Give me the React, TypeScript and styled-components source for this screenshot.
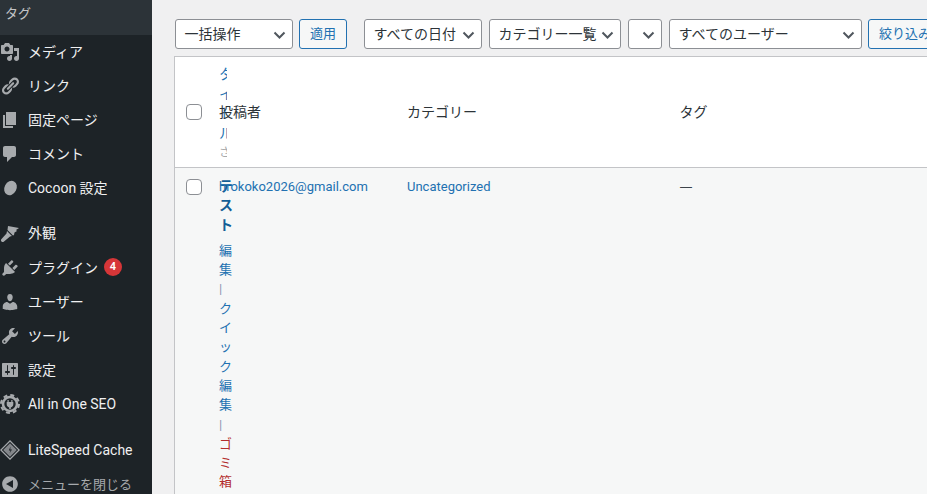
import React from 'react';
import styled, { createGlobalStyle } from 'styled-components';

const FONT = 'Roboto, "Noto Sans CJK JP", sans-serif';

const Global = createGlobalStyle`
  html, body {
    margin: 0;
    padding: 0;
    height: 100%;
    overflow: hidden;
    background: #f0f0f1;
    font-family: ${FONT};
  }
`;

const Page = styled.div`
  display: flex;
  width: 927px;
  height: 494px;
  overflow: hidden;
`;

const Sidebar = styled.nav`
  width: 152px;
  flex: none;
  height: 494px;
  overflow: hidden;
  background: #1d2327;
  color: #f0f0f1;
`;

const SubItem = styled.div`
  height: 35px;
  margin-bottom: -1px;
  background: #2c3338;
  color: #c3c4c7;
  font-size: 13px;
  line-height: 27px;
  padding-left: 5px;
`;

const MenuRow = styled.div<{ $gap?: number }>`
  display: flex;
  align-items: center;
  height: 34px;
  margin-top: ${(p) => p.$gap ?? 0}px;
  font-size: 14px;
  white-space: nowrap;
`;

const IconSlot = styled.span`
  width: 28px;
  flex: none;
  display: flex;
  align-items: center;
  color: #a7aaad;

  svg {
    display: block;
    width: 20px;
    height: 20px;
    margin-top: 2px;
    fill: currentColor;
  }
`;

const MenuLabel = styled.span<{ $latin?: boolean }>`
  padding-top: ${(p) => (p.$latin ? 2 : 0)}px;
`;

const MutedLabel = styled.span`
  color: #a7aaad;
  font-size: 13px;
`;

const Badge = styled.span`
  display: inline-block;
  width: 18px;
  height: 18px;
  margin-left: 6px;
  border-radius: 50%;
  background: #d63638;
  color: #fff;
  font-size: 11px;
  font-weight: 600;
  line-height: 18px;
  text-align: center;
`;

const Main = styled.main`
  flex: 1;
  min-width: 0;
  padding: 19px 0 0 22px;
  overflow: hidden;
`;

const Toolbar = styled.div`
  display: flex;
  align-items: center;
  width: 800px;
  height: 30px;
  padding-left: 1px;
`;

const FakeSelect = styled.div<{ $w: number; $after?: number }>`
  box-sizing: border-box;
  position: relative;
  flex: none;
  width: ${(p) => p.$w}px;
  height: 30px;
  margin-right: ${(p) => p.$after ?? 6}px;
  padding-left: 8.5px;
  background: #fff;
  border: 1px solid #8c8f94;
  border-radius: 3px;
  color: #2c3338;
  font-size: 14px;
  line-height: 28px;
  white-space: nowrap;
  overflow: hidden;

  svg {
    position: absolute;
    right: 5px;
    top: 7px;
    width: 15px;
    height: 15px;
    fill: none;
    stroke: #50575e;
    stroke-width: 2;
  }
`;

const FakeButton = styled.div<{ $w: number; $after?: number }>`
  box-sizing: border-box;
  flex: none;
  width: ${(p) => p.$w}px;
  height: 30px;
  margin-right: ${(p) => p.$after ?? 0}px;
  padding-left: 10px;
  background: #f6f7f7;
  border: 1px solid #2271b1;
  border-radius: 3px;
  color: #2271b1;
  font-size: 13px;
  line-height: 28px;
  white-space: nowrap;
  overflow: hidden;
`;

const Table = styled.div`
  margin-top: 7px;
  width: 800px;
  background: #fff;
  border: 1px solid #c3c4c7;
  border-right: 0;
`;

const Row = styled.div<{ $head?: boolean }>`
  display: grid;
  grid-template-columns: 44px 0 188px 272.5px 1fr;
  height: ${(p) => (p.$head ? '110px' : '400px')};
  background: ${(p) => (p.$head ? '#fff' : '#f6f7f7')};
  border-top: ${(p) => (p.$head ? '0' : '1px solid #c3c4c7')};
  font-size: 13px;
  line-height: 19.5px;
`;

const CheckCell = styled.div<{ $head?: boolean }>`
  display: flex;
  align-items: ${(p) => (p.$head ? 'center' : 'flex-start')};
  padding-left: 11px;
  padding-top: ${(p) => (p.$head ? 0 : 11)}px;
`;

const Check = styled.span`
  box-sizing: border-box;
  display: block;
  width: 16px;
  height: 16px;
  background: #fff;
  border: 1px solid #8c8f94;
  border-radius: 4px;
`;

const HeadCell = styled.div`
  display: flex;
  align-items: center;
  padding-top: 2px;
  color: #2c3338;
  font-size: 14px;
  white-space: nowrap;
`;

const BodyCell = styled.div`
  padding-top: 9px;
  color: #2271b1;
  white-space: nowrap;
`;

const Dash = styled.span`
  color: #3c434a;
  font-family: "Noto Sans", sans-serif;
`;

const TitleHead = styled.div`
  width: 8px;
  padding-top: 8px;
  overflow: hidden;
  color: #2271b1;
  font-size: 14px;
  line-height: 19.5px;
  word-break: break-all;
`;

const SortMark = styled.span`
  color: #a7aaad;
  font-size: 12px;
`;

const TitleBody = styled.div`
  width: 14px;
  padding-top: 9px;
  line-height: 19.3px;
  word-break: break-all;
`;

const TitleName = styled.strong`
  display: block;
  margin-bottom: 6px;
  color: #135e96;
  font-size: 14px;
  font-weight: 700;
`;

const Action = styled.span<{ $danger?: boolean }>`
  color: ${(p) => (p.$danger ? '#b32d2e' : '#2271b1')};
`;

const Pipe = styled.span`
  color: #8f95b2;
`;

const Chevron = () => (
  <svg viewBox="0 0 15 15">
    <path d="M2.5 5.5 7.5 10.5 12.5 5.5" />
  </svg>
);

const MediaIcon = () => (
  <svg viewBox="0 0 20 20">
    <path
      fillRule="evenodd"
      d="M13 11V4c0-.55-.45-1-1-1h-1.67L9 1H5L3.67 3H2c-.55 0-1 .45-1 1v7c0 .55.45 1 1 1h10c.55 0 1-.45 1-1zM7 4.5c1.38 0 2.5 1.12 2.5 2.5S8.38 9.5 7 9.5 4.5 8.38 4.5 7 5.62 4.5 7 4.5z"
    />
    <path d="M14 6h5v10.5c0 1.38-1.12 2.5-2.5 2.5S14 17.88 14 16.5s1.12-2.5 2.5-2.5c.17 0 .34.02.5.05V9h-3V6zm-4 8.05V13h2v3.5c0 1.38-1.12 2.5-2.5 2.5S7 17.88 7 16.5 8.12 14 9.5 14c.17 0 .34.02.5.05z" />
  </svg>
);
const LinkIcon = () => (
  <svg viewBox="0 0 20 20">
    <path d="M17.74 2.76c1.68 1.69 1.68 4.41 0 6.1l-1.53 1.52c-1.12 1.12-2.7 1.49-4.13 1.13l2.62-2.62.76-.76.76-.76c.84-.84.84-2.2 0-3.04-.84-.85-2.2-.85-3.04 0l-.76.76-3.38 3.38c-.37-1.43 0-3.01 1.12-4.13l1.52-1.53c1.69-1.68 4.42-1.68 6.1 0zM8.59 13.43l5.34-5.34c.42-.42.42-1.1 0-1.52-.44-.43-1.13-.39-1.52 0l-5.34 5.34c-.42.42-.42 1.1 0 1.52.44.43 1.13.39 1.52 0zm-.76 2.29l4.14-4.14c.38 1.43 0 3.01-1.12 4.13l-1.52 1.53c-1.69 1.68-4.42 1.68-6.1 0-1.68-1.69-1.68-4.42 0-6.1l1.53-1.52c1.12-1.12 2.7-1.49 4.13-1.13l-4.14 4.14c-.84.84-.84 2.2 0 3.04.84.85 2.2.85 3.04 0z" />
  </svg>
);
const PageIcon = () => (
  <svg viewBox="0 0 20 20">
    <path d="M6 15V2h10v13H6zm-1 1h8v2H3V5h2v11z" />
  </svg>
);
const CommentIcon = () => (
  <svg viewBox="0 0 20 20">
    <path d="M5 2h9c1.1 0 2 .9 2 2v7c0 1.1-.9 2-2 2h-2l-5 5v-5H5c-1.1 0-2-.9-2-2V4c0-1.1.9-2 2-2z" />
  </svg>
);
const BlobIcon = () => (
  <svg viewBox="0 0 20 20">
    <ellipse cx="10.5" cy="10" rx="6" ry="7.5" transform="rotate(28 10.5 10)" />
  </svg>
);
const BrushIcon = () => (
  <svg viewBox="0 0 20 20">
    <path d="M8 3L19 5L16 7L17 8L14.5 9.5L14 12L13 12.5L7.5 7Z" />
    <path d="M7 8L12 13L10 13.500L4 18.500C3 19.500 2 19 1.500 18.500C1 18 .5 17 1.500 16L6.500 10.500Z" />
  </svg>
);
const PluginIcon = () => (
  <svg viewBox="0 0 20 20">
    <path d="M13.11 4.36L9.87 7.6 8 5.73l3.24-3.24c.35-.34 1.05-.2 1.56.32.52.51.66 1.21.31 1.55zm-8 1.77l.91-1.12 9.01 9.01-1.19.84c-.71.71-2.63 1.16-3.82 1.16H6.14L4.9 17.26c-.59.59-1.54.59-2.12 0-.59-.58-.59-1.53 0-2.12l1.24-1.24v-3.88c0-1.13.4-3.18 1.09-3.89zm7.26 3.97l3.24-3.24c.34-.35 1.04-.21 1.55.31.52.51.66 1.21.31 1.55l-3.24 3.25z" />
  </svg>
);
const UserIcon = () => (
  <svg viewBox="0 0 20 20">
    <path d="M10 9.25c-2.27 0-2.73-3.44-2.73-3.44C7 4.02 7.82 2 9.97 2c2.16 0 2.98 2.02 2.71 3.81 0 0-.41 3.44-2.68 3.44zm0 2.57L12.72 10c2.39 0 4.52 2.33 4.52 4.53v2.49s-3.65 1.13-7.24 1.13c-3.65 0-7.24-1.13-7.24-1.13v-2.49c0-2.25 1.94-4.48 4.47-4.48z" />
  </svg>
);
const WrenchIcon = () => (
  <svg viewBox="0 0 20 20">
    <path
      fillRule="evenodd"
      d="M16.68 9.77c-1.34 1.34-3.3 1.67-4.95.99l-5.41 6.52c-.99.99-2.59.99-3.57 0-.99-.98-.99-2.58 0-3.57l6.52-5.42c-.68-1.65-.35-3.61.99-4.95 1.28-1.28 3.12-1.62 4.72-1.06l-2.89 2.89 2.82 2.82 2.86-2.87c.53 1.58.18 3.39-1.09 4.65zM3.81 16.21c.4.39 1.03.39 1.42 0 .4-.4.4-1.03 0-1.43-.39-.39-1.02-.39-1.42 0-.39.4-.39 1.03 0 1.43z"
    />
  </svg>
);
const SlidersIcon = () => (
  <svg viewBox="0 0 20 20">
    <path
      fillRule="evenodd"
      d="M18 16V4c0-.55-.45-1-1-1H3c-.55 0-1 .45-1 1v12c0 .55.45 1 1 1h14c.55 0 1-.45 1-1zM8 11h1c.55 0 1 .45 1 1s-.45 1-1 1H8v1.5c0 .28-.22.5-.5.5s-.5-.22-.5-.5V13H6c-.55 0-1-.45-1-1s.45-1 1-1h1V5.5c0-.28.22-.5.5-.5s.5.22.5.5V11zm5-2h-1c-.55 0-1-.45-1-1s.45-1 1-1h1V5.5c0-.28.22-.5.5-.5s.5.22.5.5V7h1c.55 0 1 .45 1 1s-.45 1-1 1h-1v5.5c0 .28-.22.5-.5.5s-.5-.22-.5-.5V9z"
    />
  </svg>
);
const SeoIcon = () => (
  <svg viewBox="0 0 20 20">
    <circle cx="10" cy="10" r="9" fill="none" stroke="currentColor" strokeWidth="2" strokeDasharray="4 3.07" />
    <circle cx="10" cy="10" r="7" fill="none" stroke="currentColor" strokeWidth="2.6" />
    <path d="M7.5 6h1.200v2h2.600V6h1.200v2h.8v2.300c0 1.700-1.100 2.900-2.500 3.100V15h-1.600v-1.600c-1.400-.2-2.500-1.400-2.500-3.100V8h.8z" />
  </svg>
);
const LiteSpeedIcon = () => (
  <svg viewBox="0 0 20 20">
    <path fillRule="evenodd" d="M10 0l10 10-10 10L0 10z M10 1.800 1.800 10l8.200 8.200 8.200-8.200z" />
    <path opacity="0.75" d="M10 3.200 16.800 10 10 16.800 3.200 10z" />
    <path fill="#1d2327" d="M10.500 6.500 8.800 10.500h1.700L9.500 13.500 12 9.500h-1.700z" />
  </svg>
);
const CollapseIcon = () => (
  <svg viewBox="0 0 20 20">
    <path
      fillRule="evenodd"
      d="M10 2.160c4.330 0 7.840 3.510 7.840 7.840s-3.510 7.840-7.840 7.840S2.160 14.330 2.160 10 5.670 2.160 10 2.160zm3 11.840V6l-7 4z"
    />
  </svg>
);

const menu: { label: string; icon: React.ReactNode; gap?: number; badge?: string; latin?: boolean }[] = [
  { label: 'メディア', icon: <MediaIcon /> },
  { label: 'リンク', icon: <LinkIcon /> },
  { label: '固定ページ', icon: <PageIcon /> },
  { label: 'コメント', icon: <CommentIcon /> },
  { label: 'Cocoon 設定', icon: <BlobIcon /> },
  { label: '外観', icon: <BrushIcon />, gap: 11 },
  { label: 'プラグイン', icon: <PluginIcon />, gap: 1, badge: '4' },
  { label: 'ユーザー', icon: <UserIcon /> },
  { label: 'ツール', icon: <WrenchIcon /> },
  { label: '設定', icon: <SlidersIcon /> },
  { label: 'All in One SEO', icon: <SeoIcon />, latin: true },
  { label: 'LiteSpeed Cache', icon: <LiteSpeedIcon />, gap: 12, latin: true },
];

export default function App() {
  return (
    <Page>
      <Global />
      <Sidebar>
        <SubItem>タグ</SubItem>
        {menu.map((m) => (
          <MenuRow key={m.label} $gap={m.gap}>
            <IconSlot>{m.icon}</IconSlot>
            <MenuLabel $latin={m.latin}>{m.label}</MenuLabel>
            {m.badge && <Badge>{m.badge}</Badge>}
          </MenuRow>
        ))}
        <MenuRow>
          <IconSlot>
            <CollapseIcon />
          </IconSlot>
          <MutedLabel>メニューを閉じる</MutedLabel>
        </MenuRow>
      </Sidebar>
      <Main>
        <Toolbar>
          <FakeSelect $w={118}>
            一括操作
            <Chevron />
          </FakeSelect>
          <FakeButton $w={48} $after={17}>
            適用
          </FakeButton>
          <FakeSelect $w={118} $after={7}>
            すべての日付
            <Chevron />
          </FakeSelect>
          <FakeSelect $w={132} $after={7}>
            カテゴリー一覧
            <Chevron />
          </FakeSelect>
          <FakeSelect $w={34} $after={7}>
            <Chevron />
          </FakeSelect>
          <FakeSelect $w={193}>
            すべてのユーザー
            <Chevron />
          </FakeSelect>
          <FakeButton $w={80}>絞り込み</FakeButton>
        </Toolbar>
        <Table>
          <Row $head>
            <CheckCell $head>
              <Check />
            </CheckCell>
            <div>
              <TitleHead>
                タイトル<SortMark>さ</SortMark>
              </TitleHead>
            </div>
            <HeadCell>投稿者</HeadCell>
            <HeadCell>カテゴリー</HeadCell>
            <HeadCell>タグ</HeadCell>
          </Row>
          <Row>
            <CheckCell>
              <Check />
            </CheckCell>
            <div>
              <TitleBody>
                <TitleName>テスト</TitleName>
                <Action>編集</Action>
                <Pipe> | </Pipe>
                <Action>クイック編集</Action>
                <Pipe> | </Pipe>
                <Action $danger>ゴミ箱</Action>
              </TitleBody>
            </div>
            <BodyCell>hrokoko2026@gmail.com</BodyCell>
            <BodyCell>Uncategorized</BodyCell>
            <BodyCell>
              <Dash>—</Dash>
            </BodyCell>
          </Row>
        </Table>
      </Main>
    </Page>
  );
}
